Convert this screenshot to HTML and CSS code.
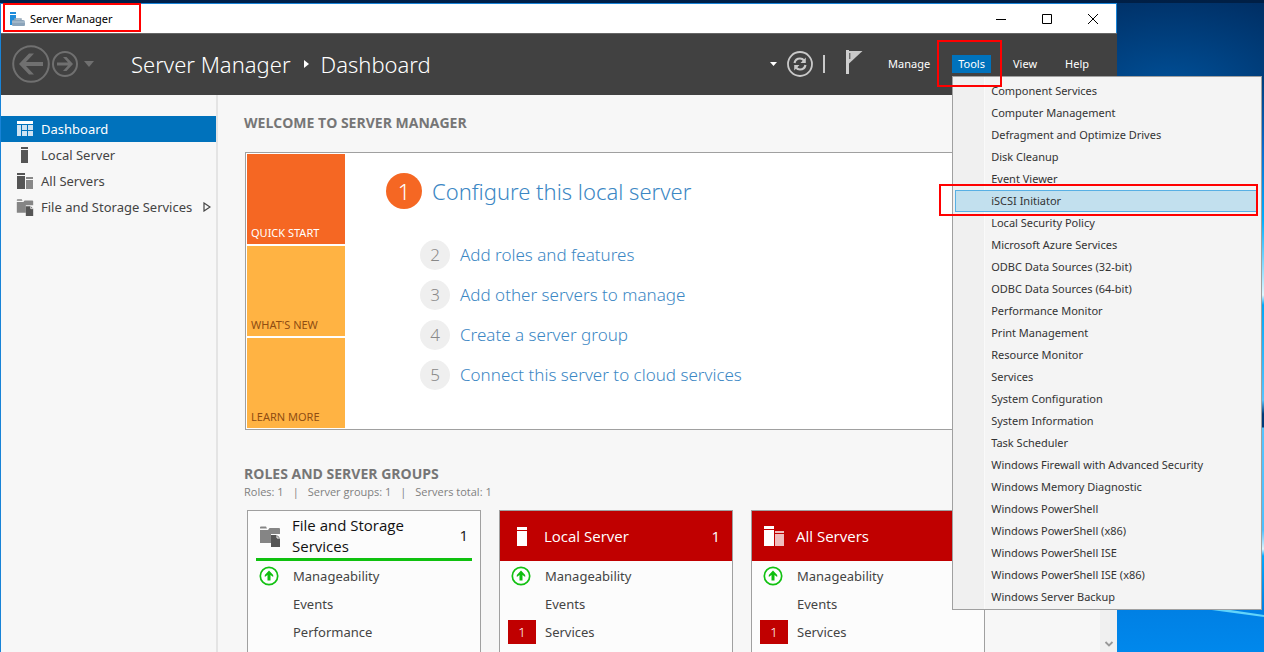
FILE: index.html
```html
<!DOCTYPE html>
<html lang="en">
<head>
<meta charset="utf-8">
<title>Server Manager</title>
<link rel="stylesheet" href="styles.css">
</head>
<body>
<svg class="defs" aria-hidden="true">
  <symbol id="up" viewBox="0 0 20 20"><circle cx="10" cy="10" r="8.700" fill="#fff" stroke="#12c112" stroke-width="1.700"/><path d="M10 4.600 14.200 9v2l-2.700-2V14.600h-3V9L5.800 11V9Z" fill="#0fbf0f"/></symbol>
  <symbol id="files" viewBox="0 0 22 22"><path d="M1 2.500q0-1 1-1h5l1 2H1ZM1 5h8l1.500-2H20q1 0 1 1v5h-9v9H1Z" fill="#858585"/><path d="M12 10h6l3 3V22h-9Z" fill="#555"/><path d="M18 10v3h3" fill="none" stroke="#f7f7f7"/></symbol>
</svg>
<div class="desktop">
  <svg class="beam" viewBox="0 0 147 50" preserveAspectRatio="none" aria-hidden="true"><path d="M60 0 147 13v2L50 2Z" fill="#62d4fa"/></svg>
  <div class="window">
    <div class="titlebar">
      <div class="caption">
        <svg class="app-icon" viewBox="0 0 16 16" aria-hidden="true"><path d="M1 1h6v2H1ZM1 4h6v10H1Z" fill="#1f8ddb"/><path d="M6 8h6v3H6Z" fill="none" stroke="#93a7b8" stroke-width="1.500"/><path d="M3 10q0-1 1-1h10q2 0 2 2v3q0 1-1 1H4q-1 0-1-1Z" fill="#8ba4ba"/><path d="M3 11h13" stroke="#b7c8d5"/></svg>
        <span>Server Manager</span>
      </div>
      <div class="controls">
        <button aria-label="Minimize"><svg viewBox="0 0 12 12"><path d="M1 6.500h10"/></svg></button>
        <button aria-label="Maximize"><svg viewBox="0 0 12 12"><path d="M1.500 1.500h9v9h-9Z"/></svg></button>
        <button aria-label="Close"><svg viewBox="0 0 12 12"><path d="m1 1 10 10M11 1 1 11"/></svg></button>
      </div>
    </div>
    <header class="header">
      <div class="nav">
        <button aria-label="Back"><svg width="38" height="38" viewBox="0 0 38 38"><circle cx="19" cy="19" r="17.800" fill="none" stroke="#707070" stroke-width="2"/><path d="M7 19 17 8.500h5L14 17h17v4H14l8 8.500h-5Z" fill="#707070"/></svg></button>
        <button aria-label="Forward"><svg width="26" height="26" viewBox="0 0 26 26"><circle cx="13" cy="13" r="12" fill="none" stroke="#707070" stroke-width="2"/><path d="M21 13 14.500 6H11l5 5.600H5v2.800h11L11 20h3.500Z" fill="#707070"/></svg></button>
        <button aria-label="History"><svg width="12" height="8" viewBox="0 0 12 8"><path d="M1 1h10L6 7Z" fill="#707070"/></svg></button>
      </div>
      <h1 class="crumbs"><span>Server Manager</span><svg width="6" height="8" viewBox="0 0 6 8" aria-hidden="true"><path d="M1 0 6 4 1 8Z" fill="#fff"/></svg><span>Dashboard</span></h1>
      <div class="tools">
        <button aria-label="Refresh options"><svg width="8" height="6" viewBox="0 0 8 6"><path d="M1 1h7L4.500 5Z" fill="#fff"/></svg></button>
        <button class="refresh" aria-label="Refresh"><svg width="26" height="26" viewBox="0 0 26 26"><circle cx="13" cy="13" r="12" fill="none" stroke="#c9c9c9" stroke-width="1.800"/><path d="M7.500 12q1-4.500 5.500-4.500 2.500 0 4 2M18.500 14q-1 4.500-5.500 4.500-2.500 0-4-2" fill="none" stroke="#c9c9c9" stroke-width="2.200"/><path d="M18.800 6.500V12H13.500ZM7.200 19.500V14h5.300Z" fill="#c9c9c9"/></svg></button>
        <span class="rule"></span>
        <button class="flag" aria-label="Notifications"><svg width="18" height="26" viewBox="0 0 18 26"><path d="M1 1h3v24H1Z" fill="#cfcfcf"/><path d="M4 2h13.500L4 14.500Z" fill="#c9c9c9"/><path d="M4.800 4v6" stroke="#444"/></svg></button>
      </div>
      <nav class="menubar">
        <button>Manage</button>
        <div class="tools-menu">
          <button class="open" aria-expanded="true">Tools</button>
          <div class="menu">
            <button>Component Services</button><button>Computer Management</button><button>Defragment and Optimize Drives</button><button>Disk Cleanup</button><button>Event Viewer</button><button class="hot">iSCSI Initiator</button><button>Local Security Policy</button><button>Microsoft Azure Services</button><button>ODBC Data Sources (32-bit)</button><button>ODBC Data Sources (64-bit)</button><button>Performance Monitor</button><button>Print Management</button><button>Resource Monitor</button><button>Services</button><button>System Configuration</button><button>System Information</button><button>Task Scheduler</button><button>Windows Firewall with Advanced Security</button><button>Windows Memory Diagnostic</button><button>Windows PowerShell</button><button>Windows PowerShell (x86)</button><button>Windows PowerShell ISE</button><button>Windows PowerShell ISE (x86)</button><button>Windows Server Backup</button>
          </div>
        </div>
        <button>View</button>
        <button>Help</button>
      </nav>
    </header>
    <div class="body">
      <nav class="sidebar">
        <a href="#dashboard" class="current"><svg viewBox="0 0 18 18"><path d="M1 1h16v3H1Z" fill="#fff"/><path d="M1 5h4v11H1ZM6 5h5v5H6ZM12 5h5v5h-5ZM6 11h5v5H6ZM12 11h5v5h-5Z" fill="#cfe3f2"/></svg>Dashboard</a>
        <a href="#local"><svg viewBox="0 0 18 18"><path d="M5 1h7v2H5ZM5 4h7v13H5Z" fill="#555"/></svg>Local Server</a>
        <a href="#all"><svg viewBox="0 0 18 18"><path d="M1 1h8v2H1ZM1 4h8v13H1Z" fill="#555"/><path d="M10 5h7v2h-7ZM10 8h7v9h-7Z" fill="#888"/></svg>All Servers</a>
        <a href="#storage"><svg viewBox="0 0 22 22"><use href="#files"/></svg>File and Storage Services<svg class="more" viewBox="0 0 8 10"><path d="M1 1v8l6-4Z" fill="none" stroke="#444" stroke-width="1.200"/></svg></a>
      </nav>
      <main class="main">
        <h2>WELCOME TO SERVER MANAGER</h2>
        <section class="welcome">
          <div class="tiles"><button class="active">QUICK START</button><button>WHAT'S NEW</button><button>LEARN MORE</button></div>
          <div class="steps">
            <a href="#1" class="first"><b>1</b>Configure this local server</a>
            <a href="#2"><b>2</b>Add roles and features</a>
            <a href="#3"><b>3</b>Add other servers to manage</a>
            <a href="#4"><b>4</b>Create a server group</a>
            <a href="#5"><b>5</b>Connect this server to cloud services</a>
          </div>
        </section>
        <h2>ROLES AND SERVER GROUPS</h2>
        <p class="totals"><span>Roles: 1</span><span>|</span><span>Server groups: 1</span><span>|</span><span>Servers total: 1</span></p>
        <div class="cards">
          <section class="card">
            <h3><svg viewBox="0 0 22 22"><use href="#files"/></svg><span>File and Storage Services</span><em>1</em></h3>
            <ul><li><svg viewBox="0 0 20 20"><use href="#up"/></svg>Manageability</li><li>Events</li><li>Performance</li></ul>
          </section>
          <section class="card alert">
            <h3><svg viewBox="0 0 22 22"><path d="M6 2h10v3H6ZM6 6h10v15H6Z" fill="#fff"/></svg><span>Local Server</span><em>1</em></h3>
            <ul><li><svg viewBox="0 0 20 20"><use href="#up"/></svg>Manageability</li><li>Events</li><li><i>1</i>Services</li></ul>
          </section>
          <section class="card alert">
            <h3><svg viewBox="0 0 22 22"><path d="M1 1h10v3H1ZM1 5h10v16H1Z" fill="#fff"/><path d="M12 6h9v2h-9ZM12 9h9v12h-9Z" fill="#f0bcbc"/></svg><span>All Servers</span><em>1</em></h3>
            <ul><li><svg viewBox="0 0 20 20"><use href="#up"/></svg>Manageability</li><li>Events</li><li><i>1</i>Services</li></ul>
          </section>
        </div>
      </main>
      <div class="scrollbar"><svg width="10" height="8" viewBox="0 0 10 8"><path d="m1.500 2 3.500 3.500L8.500 2" fill="none" stroke="#999" stroke-width="1.800"/></svg></div>
    </div>
  </div>
  <div class="mark mark-title"></div>
  <div class="mark mark-tools"></div>
  <div class="mark mark-item"></div>
</div>
</body>
</html>
```
FILE: styles.css
```css
* { box-sizing: border-box; }
body { margin: 0; font: 13px/20px "Noto Sans", "Open Sans", sans-serif; color: #444; }
button { font: inherit; color: inherit; background: none; border: 0; padding: 0; margin: 0; text-align: left; }
a { color: inherit; text-decoration: none; }
h1, h2, h3, p, ul { margin: 0; padding: 0; font-weight: 400; }
li { list-style: none; }
svg { display: block; flex: none; }
.defs { position: absolute; width: 0; height: 0; }

.desktop {
  position: relative; height: 100vh; overflow: hidden; padding: 3px 147px 0 0;
  background: linear-gradient(90deg, #00204a, #001f45) 0 0 / 100% 3px no-repeat,
    linear-gradient(#004a9000 80px, #0a6cd0 150px, #00b0ff 220px, #e0f8ff 295px, #00a8f8 305px, #55c4ff 400px, #003a78 414px, #003a78 427px, #55c4ff 428px, #4cc0ff 530px, #dff6ff 549px, #00a8ff 556px, #0080e4 610px, #0088ec),
    radial-gradient(ellipse 190px 110px at 1170px 90px, #005098, #002c60);
}
.beam { position: absolute; right: 0; bottom: 0; width: 147px; height: 50px; }
.window { display: flex; flex-direction: column; height: 100%; border: 1px solid #1883d7; border-width: 1px 0 0 1px; background: #f7f7f7; }

.titlebar { display: flex; justify-content: space-between; height: 29px; background: #fff; border-right: 1px solid #1883d7; color: #000; font-size: 11px; }
.caption { display: flex; align-items: center; gap: 5px; padding-left: 8px; }
.app-icon { width: 16px; height: 16px; }
.controls { display: flex; }
.controls button { display: grid; place-items: center; width: 46px; }
.controls svg { width: 12px; height: 12px; fill: none; stroke: #000; }

.header { display: flex; align-items: center; flex: none; height: 62px; padding-bottom: 2px; background: #414141; border-top: 1px solid #666; color: #fff; }
.nav { display: flex; align-items: center; gap: 2px; padding-left: 11px; width: 130px; }
.nav button:last-child { margin-left: 3px; }
.crumbs { display: flex; align-items: center; gap: 12px; font-size: 22px; line-height: 32px; font-weight: 300; white-space: nowrap; }
.tools { display: flex; align-items: center; margin-left: auto; gap: 10px; }
.rule { width: 2px; height: 18px; background: #c9c9c9; }
.flag { margin: 0 19px 4px 10px; }
.menubar { display: flex; font-size: 11px; line-height: 18px; padding-right: 22px; gap: 16px; }
.menubar > button, .open { padding: 0 6px; }
.open { display: block; background: #0072bc; }
.tools-menu { position: relative; }
.menu {
  position: absolute; z-index: 2; top: 21px; left: 0; width: 310px; padding: 3px 3px 1px 2px; border: 1px solid #a0a0a0;
  background: linear-gradient(90deg, #f0f0f0 30px, #e0e0e0 30px, #fff 31px, #f4f4f4 32px); color: #333;
}
.menu button { display: block; width: 100%; height: 22px; line-height: 20px; padding: 0 0 0 35px; border: 1px solid transparent; white-space: nowrap; }
.menu .hot { background: #c2e0ee; border-color: #58b0e4; }

.body { display: flex; flex: 1; min-height: 0; }
.sidebar { flex: none; width: 217px; padding-top: 21px; border-right: 2px solid #e4e4e4; }
.sidebar a { display: flex; align-items: center; height: 26px; padding-left: 15px; gap: 7px; white-space: nowrap; }
.sidebar svg { width: 18px; height: 18px; }
.sidebar .more { width: 8px; height: 10px; margin-left: 4px; }
.sidebar .current { background: #0072bc; color: #fff; }

.main { display: flex; flex-direction: column; flex: 1; min-width: 0; padding: 18px 16px 0 26px; }
.main h2 { flex: none; font-family: "Open Sans", sans-serif; font-size: 14px; font-weight: 700; color: #767676; }
.welcome { display: flex; flex: none; margin: 19px 0 34px 1px; padding: 1px; border: 1px solid #a0a0a0; background: #fff; }
.tiles { display: flex; flex-direction: column; gap: 2px; width: 98px; }
.tiles button { display: flex; align-items: flex-end; height: 90px; padding: 0 4px 1px; background: #ffb343; color: #8f4d12; font-size: 11px; }
.tiles .active { background: #f56723; color: #fff; }
.steps { display: flex; flex-direction: column; gap: 10px; padding: 17px 0 0 41px; color: #3c87c4; font-size: 17px; }
.steps a { display: flex; align-items: center; gap: 10px; height: 30px; margin-left: 34px; font-weight: 300; white-space: nowrap; }
.steps b { display: grid; place-items: center; width: 30px; height: 30px; border-radius: 50%; background: #efefef; color: #888; font-weight: 300; }
.steps .first { height: 40px; margin: 0 0 19px; font-size: 22px; }
.steps .first b { width: 36px; height: 36px; background: #f56723; color: #fff; }
.totals { display: flex; flex: none; gap: 9px; font-family: "Open Sans", sans-serif; font-size: 11px; line-height: 16px; color: #808080; }
.cards { display: flex; flex: 1; gap: 18px; margin: 10px 0 0 3px; }
.card { flex: none; width: 234px; border: 1px solid #a0a0a0; border-bottom: 0; background: #fcfcfc; }
.card h3 { display: flex; align-items: center; gap: 11px; height: 50px; margin: 0 8px; padding: 2px 4px 0 3px; border-bottom: 3px solid #0fc10f; font-family: "Open Sans", sans-serif; font-size: 15px; line-height: 21px; color: #111; }
.card h3 svg { width: 22px; height: 22px; }
.card h3 span { flex: 1; padding-right: 40px; }
.card em { font-style: normal; }
.alert h3 { margin: 0; padding: 0 12px 0 11px; border: 0; background: #c00000; color: #fff; }
.card li { position: relative; display: flex; align-items: center; height: 28px; padding-left: 45px; }
.card ul { padding-top: 1px; }
.card li svg { position: absolute; left: 11px; width: 20px; height: 20px; }
.card i { position: absolute; left: 8px; width: 28px; height: 24px; line-height: 24px; text-align: center; font-style: normal; font-weight: 300; background: #c00000; color: #fff; }
.scrollbar { display: flex; align-items: flex-end; justify-content: center; width: 17px; padding-bottom: 4px; background: #f0f0f0; }

.mark { position: absolute; z-index: 3; border: 2px solid #f00; pointer-events: none; }
.mark-title { left: 3px; top: 3px; width: 138px; height: 29px; }
.mark-tools { right: 262px; top: 40px; width: 65px; height: 47px; }
.mark-item { right: 6px; top: 184px; width: 319px; height: 32px; }
```
